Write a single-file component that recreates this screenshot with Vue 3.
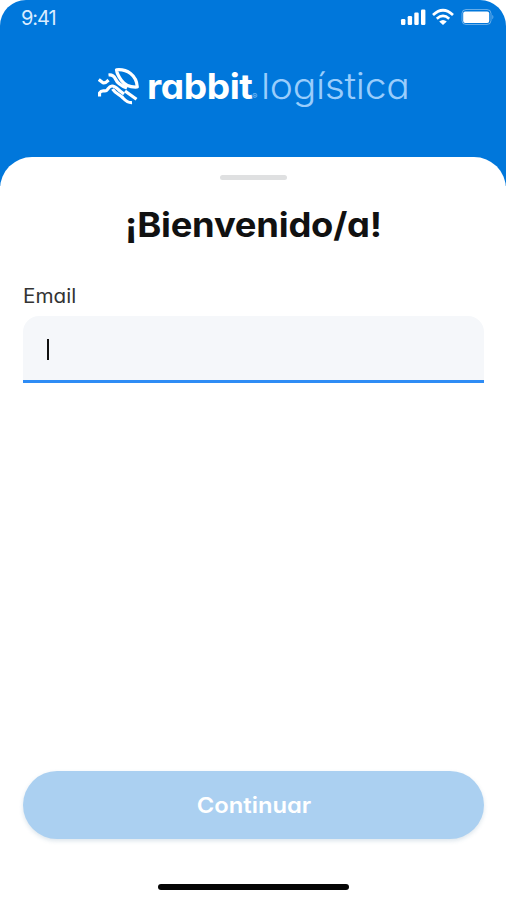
<template>
  <div class="screen">
    <!-- Status bar -->
    <header class="header">
      <div class="status-bar">
        <span class="time">9:41</span>
        <svg class="status-icons" viewBox="0 0 94 20" fill="#fff">
          <rect x="1" y="13" width="4.4" height="6" rx="1.2" />
          <rect x="7.7" y="10" width="4.4" height="9" rx="1.2" />
          <rect x="14.3" y="6.5" width="4.4" height="12.5" rx="1.2" />
          <rect x="21" y="3.5" width="4.4" height="15.5" rx="1.2" />
          <g fill="none" stroke="#fff" stroke-width="2.7">
            <path d="M33 9 Q43 -.5 53 9" />
            <path d="M36.8 12.7 Q43 7.1 49.2 12.7" />
          </g>
          <path d="M39.2 15.4 Q43 12.4 46.8 15.4 L43 19Z" />
          <rect x="62" y="3.5" width="29" height="15" rx="4" fill="none" stroke="#fff" stroke-opacity=".4" />
          <rect x="63.2" y="5.4" width="26" height="11.6" rx="2" />
          <path d="M92.3 8.8 Q94.5 11 92.3 13.4Z" opacity=".4" />
        </svg>
      </div>
      <div class="brand">
        <svg class="logo" viewBox="0 0 42 38" fill="none" stroke="#fff" stroke-width="3.2" stroke-linejoin="round">
          <path d="M18.5 1.8 C29 .8 38.5 7 39.3 19 C31 19.5 26 16 23.5 12.5 C20.5 8.5 19 6 18.5 1.8Z" />
          <path d="M10.5 7 C14.5 6.5 16 8 17.5 11 C19 14.5 22.5 17.5 29 20" />
          <path d="M.8 11.5 L5 14.8 C7.5 15.5 9 13.5 10.5 12" />
          <path d="M1.5 28.5 V25 C4 21 6.5 24 8.5 22.5 C10.5 21 10.5 18.3 14 18 C17.5 17.8 19 20.5 22 23 L26 26" />
          <path d="M27 23 L38.5 31.3" />
          <path d="M14.5 21 C17 25 21 26.5 24 29 C27 32 29 35 34 34.6" />
        </svg>
        <span class="brand-name">rabbit</span>
        <span class="reg">®</span>
        <span class="brand-area">logística</span>
      </div>
    </header>

    <!-- Login sheet -->
    <main class="sheet">
      <div class="handle"></div>
      <h1 class="title">¡Bienvenido/a!</h1>
      <label class="label" for="email">Email</label>
      <div class="field" @click="input.focus()">
        <span v-if="!email" class="caret"></span>
        <input id="email" ref="input" v-model="email" class="input" type="email" />
      </div>
      <button class="submit" type="button"><span class="submit-text">Continuar</span></button>
      <div class="home-bar"></div>
    </main>
  </div>
</template>

<script setup>
import { ref } from 'vue'

const email = ref('')
const input = ref(null)
</script>

<style>
body {
  margin: 0;
  background: #fff;
}
</style>

<style scoped>
.screen {
  box-sizing: border-box;
  width: 506px;
  height: 900px;
  display: flex;
  flex-direction: column;
  overflow: hidden;
  border-radius: 26px 26px 0 0;
  background: linear-gradient(#0077db 186px, #fff 186px);
  font-family: Inter, "Liberation Sans", sans-serif;
  font-feature-settings: "cv11";
}

.header {
  height: 157px;
  color: #fff;
}

.status-bar {
  display: flex;
  justify-content: space-between;
  height: 36px;
  padding: 6px 12px 0 21px;
  box-sizing: border-box;
}

.time {
  font-size: 20px;
  line-height: 24px;
  letter-spacing: -1.1px;
  color: #d9ecff;
}

.status-icons {
  width: 94px;
  height: 20px;
}

.brand {
  display: flex;
  align-items: center;
  height: 44px;
  margin-top: 28px;
  padding-left: 98px;
  line-height: 44px;
}

.logo {
  width: 42px;
  height: 38px;
  margin: 2px 7px 0 0;
}

.brand-name {
  width: 105px;
  font-size: 35px;
  font-weight: 700;
  letter-spacing: -0.4px;
  /* widen the letters, not the gaps */
  transform: scaleX(1.06);
  transform-origin: left;
}

.reg {
  width: 9px;
  padding-top: 20px;
  font-size: 8px;
  color: #8cc6fa;
}

.brand-area {
  font-size: 36px;
  font-weight: 300;
  letter-spacing: -0.3px;
  color: #99cdfc;
  transform: scaleX(1.086);
  transform-origin: left;
}

.sheet {
  flex: 1;
  display: flex;
  flex-direction: column;
  padding: 18px 22px 10px 23px;
  border-radius: 32px 32px 0 0;
  background: #fff;
}

.handle {
  align-self: center;
  width: 67px;
  height: 5px;
  border-radius: 3px;
  background: #dfe0e1;
}

.title {
  margin: 24px 0 0;
  font-size: 34px;
  line-height: 42px;
  font-weight: 700;
  letter-spacing: -0.2px;
  text-align: center;
  color: #111;
  transform: scaleX(1.07);
}

.label {
  align-self: flex-start;
  margin-top: 38px;
  font-size: 19.5px;
  line-height: 24px;
  color: #333;
  transform: scaleX(1.06);
  transform-origin: left;
}

.field {
  display: flex;
  align-items: center;
  box-sizing: border-box;
  height: 67px;
  margin-top: 8px;
  padding: 0 24px;
  border-bottom: 3px solid #2e8cf5;
  border-radius: 16px 16px 0 0;
  background: #f5f7fa;
}

.caret {
  width: 2px;
  height: 21px;
  margin-top: 2px;
  background: #111;
}

.input {
  flex: 1;
  border: 0;
  outline: 0;
  background: none;
  font: inherit;
  font-size: 20px;
}

.submit {
  height: 68px;
  margin-top: auto;
  border: 0;
  border-radius: 34px;
  background: #abd0f1;
  box-shadow: 0 2px 4px rgba(60, 110, 150, 0.18);
  color: #fff;
  font: inherit;
  font-feature-settings: inherit;
  font-size: 22px;
  font-weight: 600;
}

.submit-text {
  display: inline-block;
  transform: scaleX(1.08);
}

.home-bar {
  flex-shrink: 0;
  align-self: center;
  width: 191px;
  height: 6px;
  margin-top: 45px;
  border-radius: 3px;
  background: #050505;
}
</style>
